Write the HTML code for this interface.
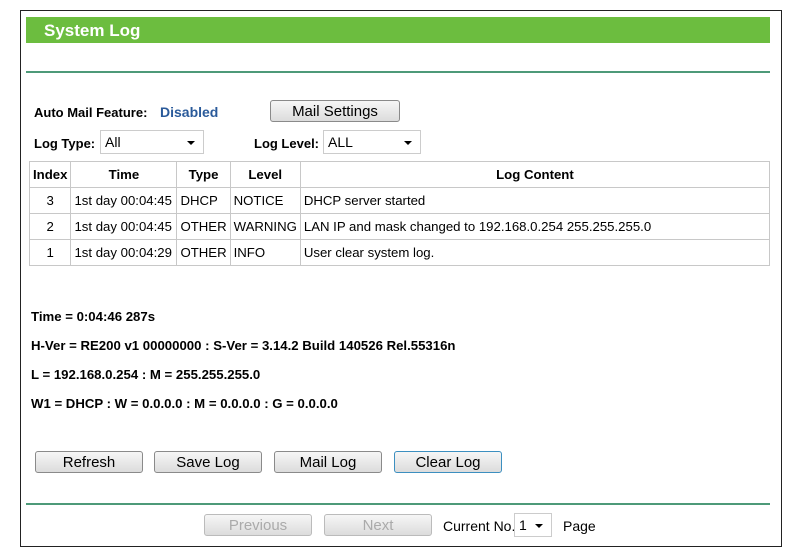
<!DOCTYPE html><html><head><style>
body{margin:0;background:#fff;font-family:"Liberation Sans",Arial,sans-serif;font-size:13px;color:#000;}
.box{position:absolute;left:20px;top:10px;width:760px;height:535px;border:1px solid #222;background:#fff;}
.a{position:absolute;}
.hdr{left:26px;top:17px;width:744px;height:26px;background:#6cbd3f;color:#fff;font-weight:bold;font-size:17px;line-height:27px;padding-left:18px;box-sizing:border-box;}
.line{height:2px;background:#4d9a79;left:26px;width:744px;}
.btn{border:1px solid #8a8a8a;border-radius:3px;background:linear-gradient(#f6f6f6,#dcdcdc);text-align:center;font-size:15px;line-height:22px;height:20px;box-sizing:content-box;overflow:hidden;}
.sel{border:1px solid #ccc;background:#fff;font-size:14px;line-height:22px;padding-left:4px;box-sizing:border-box;height:24px;}
.sel:after{content:"";position:absolute;right:8px;top:10px;border-left:4px solid transparent;border-right:4px solid transparent;border-top:4px solid #000;}
table{position:absolute;left:29px;top:161px;border-collapse:collapse;width:741px;font-size:13.2px;}
td,th{border:1px solid #c8c8c8;height:25px;padding:0 3px;white-space:nowrap;}
th{font-weight:bold;}
.info{left:31px;font-weight:bold;font-size:13.2px;}
</style></head><body>
<div class="box"></div>
<div class="a hdr">System Log</div>
<div class="a line" style="top:71px"></div>
<div class="a" style="left:34px;top:105px;font-weight:bold;font-size:13px">Auto Mail Feature:</div>
<div class="a" style="left:160px;top:104px;font-weight:bold;font-size:14px;color:#2a5a9a">Disabled</div>
<div class="a btn" style="left:270px;top:100px;width:128px">Mail Settings</div>
<div class="a" style="left:34px;top:136px;font-weight:bold">Log Type:</div>
<div class="a sel" style="left:100px;top:130px;width:104px">All</div>
<div class="a" style="left:254px;top:136px;font-weight:bold">Log Level:</div>
<div class="a sel" style="left:323px;top:130px;width:98px">ALL</div>
<table>
<tr><th style="width:33px">Index</th><th style="width:99px">Time</th><th style="width:46px">Type</th><th style="width:62px">Level</th><th>Log Content</th></tr>
<tr><td style="text-align:center">3</td><td>1st day 00:04:45</td><td>DHCP</td><td>NOTICE</td><td>DHCP server started</td></tr>
<tr><td style="text-align:center">2</td><td>1st day 00:04:45</td><td>OTHER</td><td>WARNING</td><td>LAN IP and mask changed to 192.168.0.254 255.255.255.0</td></tr>
<tr><td style="text-align:center">1</td><td>1st day 00:04:29</td><td>OTHER</td><td>INFO</td><td>User clear system log.</td></tr>
</table>
<div class="a info" style="top:309px">Time = 0:04:46 287s</div>
<div class="a info" style="top:338px">H-Ver = RE200 v1 00000000 : S-Ver = 3.14.2 Build 140526 Rel.55316n</div>
<div class="a info" style="top:367px">L = 192.168.0.254 : M = 255.255.255.0</div>
<div class="a info" style="top:396px">W1 = DHCP : W = 0.0.0.0 : M = 0.0.0.0 : G = 0.0.0.0</div>
<div class="a btn" style="left:35px;top:451px;width:106px">Refresh</div>
<div class="a btn" style="left:154px;top:451px;width:106px">Save Log</div>
<div class="a btn" style="left:274px;top:451px;width:106px">Mail Log</div>
<div class="a btn" style="left:394px;top:451px;width:106px;border-color:#3c8fc0">Clear Log</div>
<div class="a line" style="top:503px"></div>
<div class="a btn" style="left:204px;top:514px;width:106px;color:#aaa;border-color:#bbb">Previous</div>
<div class="a btn" style="left:324px;top:514px;width:106px;color:#aaa;border-color:#bbb">Next</div>
<div class="a" style="left:443px;top:518px;font-size:14px">Current No.</div>
<div class="a sel" style="left:514px;top:513px;width:38px">1</div>
<div class="a" style="left:563px;top:518px;font-size:14px">Page</div>
</body></html>
